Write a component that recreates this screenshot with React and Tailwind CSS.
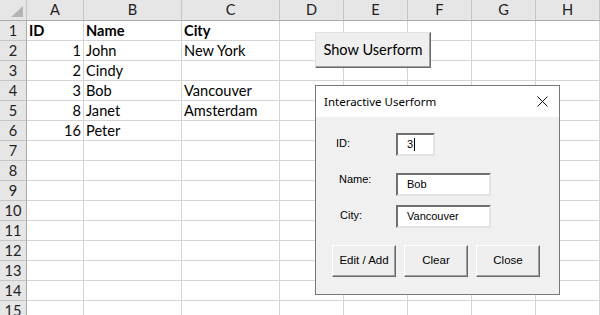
const colClasses = "grid grid-cols-[27px_57px_98px_98px_64px_64px_64px_64px_64px]";
const letters = ["A", "B", "C", "D", "E", "F", "G", "H"];

const rows = [
  { id: "ID", name: "Name", city: "City", bold: true },
  { id: "1", name: "John", city: "New York" },
  { id: "2", name: "Cindy", city: "" },
  { id: "3", name: "Bob", city: "Vancouver" },
  { id: "8", name: "Janet", city: "Amsterdam" },
  { id: "16", name: "Peter", city: "" },
  {}, {}, {}, {}, {}, {}, {}, {}, {},
];

const cell = "h-[20px] border-r border-b border-[#d4d4d4] px-[2px] leading-[19px] whitespace-nowrap overflow-hidden";

function Sheet() {
  return (
    <div className="font-['Lato',sans-serif] text-[14.6px] text-black">
      <div className={colClasses}>
        <div className="h-[21px] bg-[#e6e6e6] border-r border-b border-r-[#c6c6c6] border-b-[#ababab] flex items-end justify-end pr-[3px] pb-[3px]">
          <svg width="12" height="11" viewBox="0 0 12 11">
            <polygon points="12,0 12,11 0,11" fill="#b4b4b4" />
          </svg>
        </div>
        {letters.map((l) => (
          <div
            key={l}
            className="h-[21px] bg-[#e6e6e6] border-r border-b border-r-[#c6c6c6] border-b-[#ababab] text-center leading-[20px] text-[#222]"
          >
            {l}
          </div>
        ))}
      </div>
      {rows.map((r, i) => (
        <div key={i} className={colClasses}>
          <div className="h-[20px] bg-[#e6e6e6] border-r border-b border-r-[#ababab] border-b-[#c6c6c6] text-center leading-[19px] text-[#222]">
            {i + 1}
          </div>
          <div className={`${cell} ${r.bold ? "font-bold text-left" : "text-right"}`}>{r.id}</div>
          <div className={`${cell} ${r.bold ? "font-bold" : ""}`}>{r.name}</div>
          <div className={`${cell} ${r.bold ? "font-bold" : ""}`}>{r.city}</div>
          <div className={cell}></div>
          <div className={cell}></div>
          <div className={cell}></div>
          <div className={cell}></div>
          <div className={cell}></div>
        </div>
      ))}
    </div>
  );
}

function TextBox({ value, width, caret }) {
  return (
    <div
      className={`${width} h-[23px] bg-white border-2 border-t-[#6f6f6f] border-l-[#6f6f6f] border-r-[#e3e3e3] border-b-[#e3e3e3] flex items-center pl-[9px] text-[11px]`}
    >
      <span>{value}</span>
      {caret && <span className="ml-[1px] w-[1px] h-[13px] bg-black" />}
    </div>
  );
}

function FormButton({ children }) {
  return (
    <div className="w-[64px] h-[32px] bg-[#efefef] border border-t-white border-l-white border-r-[#6a6a6a] border-b-[#6a6a6a] shadow-[inset_-1px_-1px_0_#a0a0a0] flex items-center justify-center text-[11.5px]">
      {children}
    </div>
  );
}

function Userform() {
  return (
    <div className="absolute left-[315px] top-[85px] w-[245px] h-[210px] border border-[#777] bg-[#f0f0f0] flex flex-col font-['Liberation_Sans',Arial,sans-serif] text-black">
      <div className="h-[31px] bg-white flex items-center justify-between pl-[8px] pr-[11px]">
        <span className="font-['Noto_Sans',sans-serif] text-[11.5px]">Interactive Userform</span>
        <svg width="11" height="11" viewBox="0 0 11 11">
          <path d="M0.5 0.5 L10.5 10.5 M10.5 0.5 L0.5 10.5" stroke="#111" strokeWidth="1" />
        </svg>
      </div>
      <div className="flex flex-col pt-[16px] pl-[80px]">
        <div className="flex h-[23px]">
          <span className="w-[60px] -ml-[60px] text-[11px] pt-[2px]">ID:</span>
          <TextBox value="3" width="w-[39px]" caret />
        </div>
        <div className="flex h-[23px] mt-[17px]">
          <span className="w-[57px] -ml-[57px] text-[11px] -mt-[2px]">Name:</span>
          <TextBox value="Bob" width="w-[95px]" />
        </div>
        <div className="flex h-[23px] mt-[9px]">
          <span className="w-[56px] -ml-[56px] text-[11px] pt-[2px]">City:</span>
          <TextBox value="Vancouver" width="w-[95px]" />
        </div>
      </div>
      <div className="flex gap-[8px] pl-[16px] mt-[17px]">
        <FormButton>Edit / Add</FormButton>
        <FormButton>Clear</FormButton>
        <FormButton>Close</FormButton>
      </div>
    </div>
  );
}

export default function App() {
  return (
    <div className="relative w-[600px] h-[315px] overflow-hidden bg-white">
      <Sheet />
      <div className="absolute left-[315px] top-[32px] w-[116px] h-[36px] bg-[#efefef] border border-t-[#e0e0e0] border-l-[#e0e0e0] border-r-[#6a6a6a] border-b-[#6a6a6a] shadow-[inset_-1px_-1px_0_#a0a0a0] flex items-center justify-center font-['Lato',sans-serif] text-[14.6px] text-black">
        Show Userform
      </div>
      <Userform />
    </div>
  );
}
